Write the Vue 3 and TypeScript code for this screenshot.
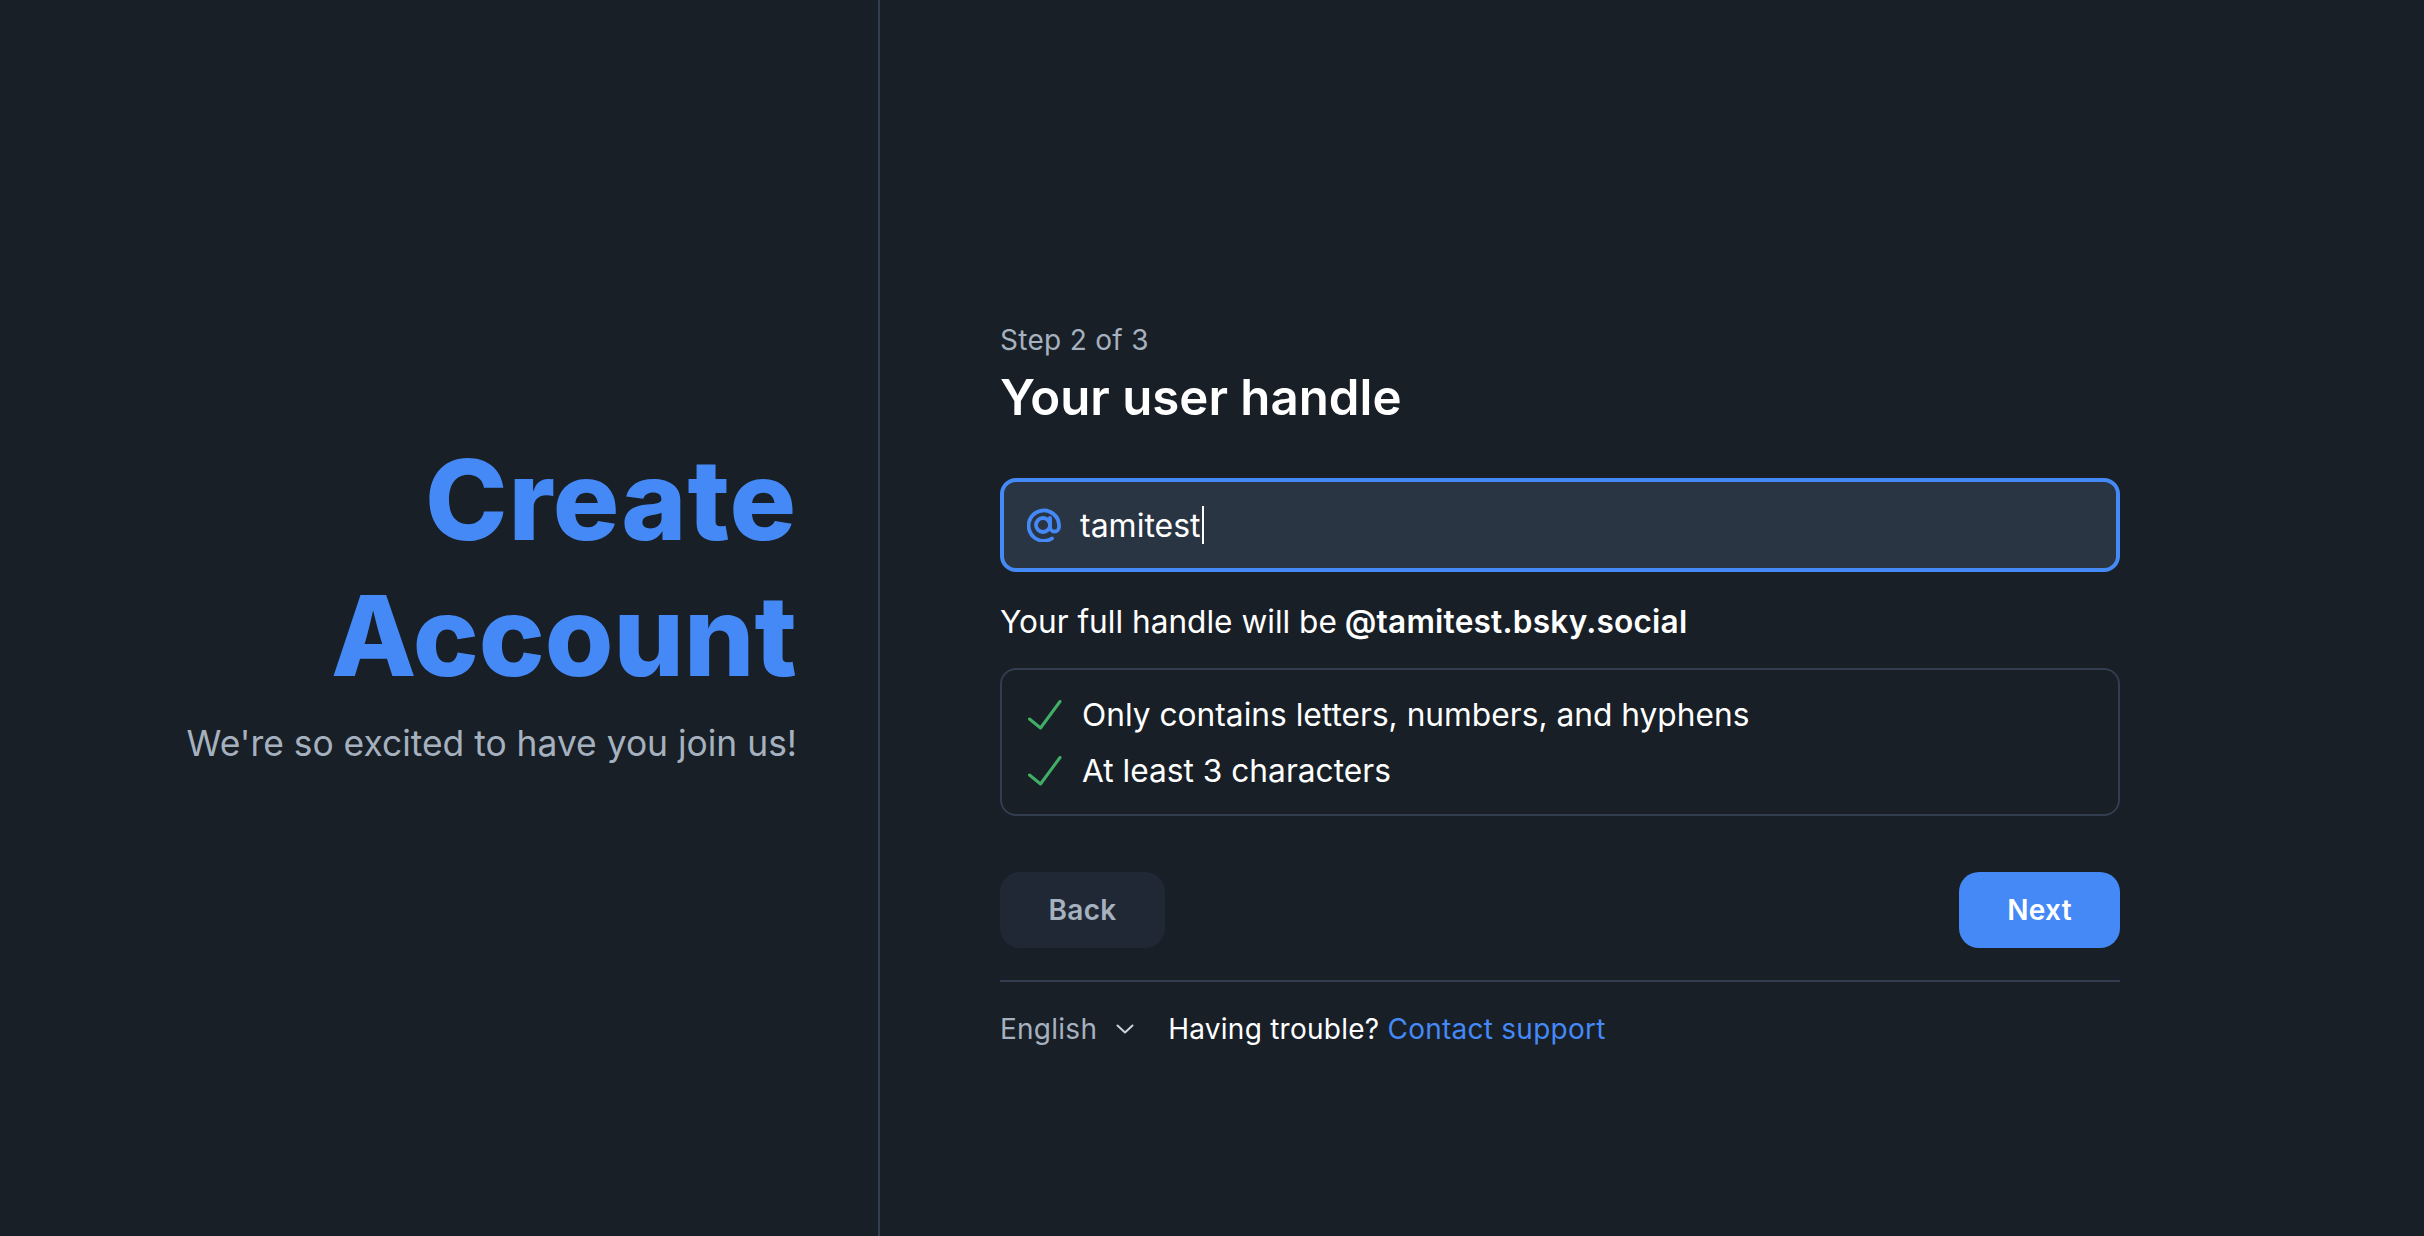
<script setup lang="ts">
const rules: string[] = ['Only contains letters, numbers, and hyphens', 'At least 3 characters']
</script>

<template>
  <div class="page">
    <aside class="intro">
      <h1 class="title"><span class="first">Create</span><br />Account</h1>
      <p class="tagline">We're so excited to have you join us!</p>
    </aside>
    <main class="panel">
      <div class="step">Step 2 of 3</div>
      <h2 class="heading">Your user handle</h2>
      <div class="field">
        <svg class="at" viewBox="0 0 34 34" fill="none" stroke="currentColor" stroke-width="3.8" stroke-linecap="round" stroke-linejoin="round">
          <circle cx="16" cy="17" r="7" />
          <path d="M25 30.5 A15.2 15.2 0 1 1 32 17 v2 a4.5 4.5 0 0 1 -9 0 V10" />
        </svg>
        <span class="value">tamitest</span><span class="caret"></span>
      </div>
      <p class="full">Your full handle will be <strong>@tamitest.bsky.social</strong></p>
      <ul class="rules">
        <li v-for="rule in rules" :key="rule" class="rule">
          <svg class="check" viewBox="0 0 34 30" fill="none" stroke="currentColor" stroke-width="3" stroke-linecap="round" stroke-linejoin="round">
            <path d="M1.5 19 L12.5 28 L32 1.5" />
          </svg>
          <span>{{ rule }}</span>
        </li>
      </ul>
      <div class="actions">
        <button class="btn back" type="button">Back</button>
        <button class="btn next" type="button">Next</button>
      </div>
      <footer class="foot">
        <span class="lang">English
          <svg class="chev" viewBox="0 0 18 10" fill="none" stroke="currentColor" stroke-width="2" stroke-linecap="round" stroke-linejoin="round">
            <path d="M1.5 1.5 L9 8.5 L16.5 1.5" />
          </svg>
        </span>
        <span class="help">Having trouble? <a class="link">Contact support</a></span>
      </footer>
    </main>
  </div>
</template>

<style scoped>
.page {
  display: flex;
  height: 1236px;
  overflow: hidden;
  background: #181f27;
  color: #fff;
  font-family: Inter, "Liberation Sans", sans-serif;
}
.intro {
  box-sizing: border-box;
  width: 880px;
  flex: none;
  padding: 432px 81px 0 0;
  border-right: 2px solid #323d4f;
  text-align: right;
}
.title {
  margin: 0;
  color: #4589f6;
  font-size: 111px;
  line-height: 136px;
  font-weight: 800;
}
.first {
  letter-spacing: 0.8px;
}
.tagline {
  margin: 16px 0 0;
  color: #a6b1bf;
  font-size: 35.4px;
  line-height: 48px;
}
.panel {
  box-sizing: border-box;
  width: 1120px;
  margin-left: 120px;
  padding-top: 322px;
  flex: none;
}
.step {
  color: #a6b1bf;
  font-size: 28px;
  letter-spacing: 0.3px;
  line-height: 36px;
}
.heading {
  margin: 7px 0 0;
  font-size: 49.2px;
  line-height: 64px;
  font-weight: 600;
}
.field {
  box-sizing: border-box;
  height: 94px;
  margin-top: 49px;
  padding-left: 23px;
  display: flex;
  align-items: center;
  background: #2a3544;
  border: 4px solid #4589f6;
  border-radius: 16px;
}
.at {
  width: 34px;
  height: 34px;
  color: #4589f6;
  flex: none;
}
.value {
  margin-left: 19px;
  font-size: 32px;
}
.caret {
  width: 2px;
  height: 38px;
  margin-left: 1px;
  background: #fff;
}
.full {
  margin: 30px 0 0;
  font-size: 31.6px;
  line-height: 40px;
}
.full strong {
  margin-left: -1px;
  font-weight: 640;
  letter-spacing: 0.22px;
}
.rules {
  box-sizing: border-box;
  height: 148px;
  margin: 26px 0 0;
  padding: 23px 26px;
  list-style: none;
  display: flex;
  flex-direction: column;
  gap: 12px;
  border: 2px solid #323d4f;
  border-radius: 16px;
}
.rule {
  display: flex;
  align-items: center;
  gap: 20px;
  font-size: 31.7px;
  line-height: 44px;
}
.check {
  width: 34px;
  height: 30px;
  color: #41ae66;
  flex: none;
}
.actions {
  display: flex;
  justify-content: space-between;
  margin-top: 56px;
}
.btn {
  height: 76px;
  border: none;
  border-radius: 20px;
  font-family: inherit;
  font-size: 28px;
  letter-spacing: 0.3px;
  font-weight: 600;
}
.back {
  width: 165px;
  background: #212835;
  color: #a6b1bf;
}
.next {
  width: 161px;
  background: #4589f6;
  color: #fff;
}
.foot {
  display: flex;
  align-items: center;
  margin-top: 32px;
  padding-top: 17px;
  border-top: 2px solid #323d4f;
  font-size: 28px;
  letter-spacing: 0.25px;
  line-height: 60px;
}
.lang {
  display: flex;
  align-items: center;
  gap: 19px;
  color: #a6b1bf;
}
.chev {
  width: 18px;
  height: 10px;
  color: #cdd3dc;
}
.help {
  margin-left: 34px;
}
.link {
  color: #4589f6;
}
</style>

<style>
body {
  background: #181f27;
}
</style>
